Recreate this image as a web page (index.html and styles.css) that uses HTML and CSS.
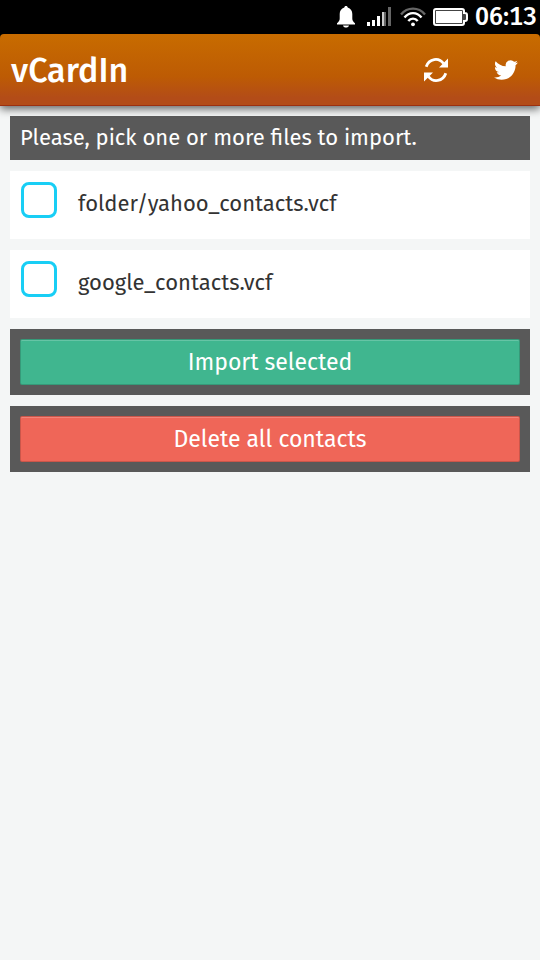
FILE: index.html
```html
<!DOCTYPE html>
<html lang="en">
<head>
<meta charset="utf-8">
<meta name="viewport" content="width=device-width, initial-scale=1">
<title>vCardIn</title>
<link rel="stylesheet" href="styles.css">
</head>
<body>
<div class="status">
  <svg class="bell" width="20" height="22" viewBox="0 0 20 22" aria-hidden="true"><path fill="#fff" d="M10 0c1 0 1.700.700 1.700 1.600C14.700 2.400 16.300 5 16.300 8v4.500c0 2 1 3.300 2.700 4.700V18.500H1V17.200C2.700 15.800 3.700 14.500 3.700 12.500V8c0-3 1.600-5.600 4.600-6.400C8.300.7 9 0 10 0zM7 19.500h6c-.4 1.500-1.500 2-3 2s-2.600-.5-3-2z"/></svg>
  <svg class="signal" width="24" height="19" viewBox="0 0 24 19" aria-hidden="true"><g fill="#fff"><path d="M0 15h3v4H0zM5 13h3v6H5zM10 9h3v10h-3z"/><path fill="#666" d="M15 5h4v14h-4zM21 0h3v19h-3z"/><path fill="#ccc" d="M15 5h2v14h-2z"/></g></svg>
  <svg class="wifi" width="26" height="20" viewBox="0 0 26 20" aria-hidden="true"><g fill="none" stroke="#fff" stroke-width="2.400"><path stroke="#666" d="M1 7.500C7.500-.4 18.500-.4 25 7.500"/><path d="M4.500 10.500c4.700-5.800 12.300-5.800 17 0M8.300 14c2.600-3.200 6.800-3.200 9.400 0"/></g><circle cx="13" cy="17.300" r="1.900" fill="#fff"/></svg>
  <svg class="battery" width="35" height="18" viewBox="0 0 35 18" aria-hidden="true"><path d="M3 1h26q2 0 2 2v2h1q2 0 2 2v4q0 2-2 2h-1v2q0 2-2 2H3q-2 0-2-2V3q0-2 2-2z" fill="#444" stroke="#fff" stroke-width="2"/><path fill="#fff" d="M3 3h26v12H3z"/></svg>
  <time class="clock">06:13</time>
</div>
<header class="bar">
  <h1>vCardIn</h1>
  <button class="tool" type="button" aria-label="Refresh"><svg width="24" height="24" viewBox="0 0 24 24"><g fill="none" stroke="#fff" stroke-width="2.800"><path d="M2.200 8.700C5 .2 15-.8 19.500 5.500M21.800 15.300C19 23.800 9 24.800 4.500 18.500"/></g><path fill="#fff" d="M24 .5v9h-9zM0 23.500v-9h9z"/></svg></button>
  <button class="tool" type="button" aria-label="Twitter"><svg width="24" height="24" viewBox="0 0 24 24"><path fill="#fff" d="M23.950 4.570a10 10 0 0 1-2.820.780 4.960 4.960 0 0 0 2.160-2.720c-.95.550-2 .960-3.130 1.180a4.920 4.920 0 0 0-8.380 4.480C7.690 8.100 4.070 6.130 1.640 3.160a4.820 4.820 0 0 0-.670 2.480c0 1.710.870 3.210 2.190 4.100a4.900 4.900 0 0 1-2.230-.620v.060a4.920 4.920 0 0 0 3.950 4.830 5 5 0 0 1-2.210.080 4.940 4.940 0 0 0 4.600 3.420A9.870 9.870 0 0 1 0 19.540a14 14 0 0 0 7.550 2.210c9.050 0 14-7.500 14-13.980 0-.210 0-.420-.020-.630a9.940 9.940 0 0 0 2.420-2.570z"/></svg></button>
</header>
<main>
  <p class="note">Please, pick one or more files to import.</p>
  <label class="file"><input type="checkbox"><span>folder/yahoo_contacts.vcf</span></label>
  <label class="file"><input type="checkbox"><span>google_contacts.vcf</span></label>
  <div class="action"><button class="btn import" type="button">Import selected</button></div>
  <div class="action"><button class="btn delete" type="button">Delete all contacts</button></div>
</main>
</body>
</html>
```
FILE: styles.css
```css
* { box-sizing: border-box; }
body {
  margin: 0;
  min-height: 100vh;
  background: #f4f6f6;
  color: #333;
  font: 400 22px/32px "Fira Sans", Roboto, "Noto Sans", sans-serif;
}
.status {
  display: flex;
  align-items: center;
  justify-content: flex-end;
  gap: 7px;
  height: 40px;
  padding: 0 3px 7px 0;
  margin-bottom: -6px;
  background: #000;
  color: #fff;
}
.signal { margin: 0 2px; }
.bell { margin-right: 2px; }
.clock { font-size: 25px; font-weight: 500; font-variant-numeric: tabular-nums; }
.bar {
  position: relative;
  display: flex;
  align-items: center;
  gap: 2px;
  height: 72px;
  padding: 0 0 0 11px;
  border-bottom: 1px solid #9c3010;
  border-radius: 4px 4px 0 0;
  background: linear-gradient(#c86c00, #bd5b04 60%, #b34c18 90%, #b34c18);
  box-shadow: 0 3px 8px rgba(0, 0, 0, .6);
  color: #fff;
}
h1 { flex: 1; margin: 0; padding-top: 2px; font-size: 34px; font-weight: 500; }
.tool {
  display: grid;
  place-items: center;
  width: 68px;
  height: 72px;
  padding: 0;
  border: 0;
  background: none;
}
main {
  display: flex;
  flex-direction: column;
  gap: 11px;
  padding: 10px;
}
.note {
  margin: 0;
  padding: 6px 10px;
  background: #595959;
  color: #fff;
}
.file {
  display: flex;
  align-items: flex-start;
  gap: 21px;
  padding: 11px 11px 21px;
  background: #fff;
}
.file span { padding-top: 6px; margin-bottom: -2px; }
.file input {
  appearance: none;
  width: 36px;
  height: 36px;
  margin: 0;
  border: 3px solid #18cef5;
  border-radius: 8px;
  background: #fff;
}
.file input:checked { background: #18cef5; }
.action { padding: 10px; background: #595959; }
.btn {
  display: block;
  width: 100%;
  height: 46px;
  padding: 0;
  border: 1px solid rgba(0, 0, 0, .15);
  border-radius: 2px;
  box-shadow: inset 0 1px rgba(255, 255, 255, .2);
  color: #fff;
  font: inherit;
  font-size: 23px;
}
.import { background: #40b68f; }
.delete { background: #ef6658; }
```
